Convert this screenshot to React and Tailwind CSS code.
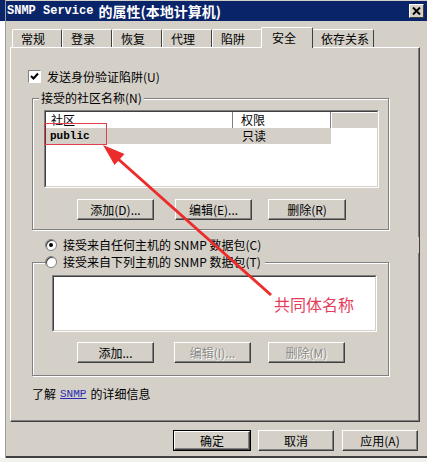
import React from "react";

const cjk = { fontFamily: '"Noto Sans CJK SC", "DejaVu Sans", sans-serif' };

const Btn = ({ label, w = "w-[77px]", disabled = false, isDefault = false, className = "" }) => (
  <div
    className={`${w} h-[21px] flex items-center justify-center text-[12px] leading-none ${
      isDefault ? "border border-black" : ""
    } ${className}`}
    style={cjk}
  >
    <div className="w-full h-full flex items-center justify-center border border-t-white border-l-white border-r-[#404040] border-b-[#404040] shadow-[inset_-1px_-1px_0_#808080]">
      <span className={disabled ? "text-[#8c8a86] [text-shadow:1px_1px_0_#fff]" : "text-black"}>{label}</span>
    </div>
  </div>
);

const Tab = ({ label, active, w = "w-[50px]" }) => (
  <div
    className={`flex items-center whitespace-nowrap px-[8px] text-[12px] leading-none text-black bg-[#d4d0c8] border-t border-l border-white border-r border-r-[#404040] rounded-t-[2px] ${w} ${
      active ? "h-[21px] -mx-[1px] relative z-10 -mb-[1px] pl-[10px]" : "h-[18px]"
    }`}
    style={cjk}
  >
    {label}
  </div>
);

const Radio = ({ checked, label }) => (
  <div className="flex items-center h-[16px] gap-[6px] bg-[#d4d0c8] pr-[4px]">
    <div className="w-[12px] h-[12px] rounded-full bg-white border border-[#808080] shadow-[inset_1px_1px_0_#404040] flex items-center justify-center">
      {checked && <div className="w-[4px] h-[4px] rounded-full bg-black" />}
    </div>
    <span className="text-[12px] leading-none text-black" style={cjk}>
      {label}
    </span>
  </div>
);

const Sunken = ({ className = "", children }) => (
  <div className={`bg-white border border-t-[#808080] border-l-[#808080] border-b-white border-r-white ${className}`}>
    <div className="w-full h-full border border-t-[#404040] border-l-[#404040] border-b-[#d4d0c8] border-r-[#d4d0c8]">
      {children}
    </div>
  </div>
);

export default function App() {
  return (
    <div className="w-[427px] h-[462px] bg-[#f2f1ee] relative overflow-hidden flex">
      {/* window behind */}
      <div className="w-[6px] h-[458px] bg-white border-r border-[#9c9a96] flex flex-col">
        <div className="h-[21px] bg-[#0a246a]" />
      </div>

      <div className="flex-1 h-[458px] bg-[#d4d0c8] border-b-2 border-[#404040] flex flex-col">
        {/* title bar */}
        <div className="h-[20px] mt-[1px] bg-[#0a246a] flex items-center pl-[1px] pr-[3px]">
          <span className="text-white font-bold text-[12px]" style={{ fontFamily: '"Liberation Mono", monospace' }}>
            SNMP Service
          </span>
          <span className="text-white font-bold text-[14px] ml-[5px] leading-none" style={cjk}>
            的属性(本地计算机)
          </span>
          <div className="ml-auto w-[15px] h-[14px] bg-[#d4d0c8] border border-t-white border-l-white border-r-[#404040] border-b-[#404040] flex items-center justify-center">
            <svg width="9" height="8" viewBox="0 0 9 8">
              <path d="M1 0.5 L8 7.5 M8 0.5 L1 7.5" stroke="#000" strokeWidth="2" />
            </svg>
          </div>
        </div>

        {/* tabs */}
        <div className="h-[26px] flex items-end pl-[6px]">
          <Tab label="常规" />
          <Tab label="登录" />
          <Tab label="恢复" />
          <Tab label="代理" />
          <Tab label="陷阱" />
          <Tab label="安全" w="w-[52px]" active />
          <Tab label="依存关系" w="w-[62px]" />
        </div>

        {/* panel */}
        <div className="ml-[4px] w-[410px] h-[375px] border border-t-white border-l-white border-r-[#404040] border-b-[#404040] shadow-[inset_-1px_-1px_0_#808080] flex flex-col">
          {/* checkbox */}
          <div className="mt-[22px] ml-[17px] flex items-center h-[13px] gap-[6px]">
            <div className="w-[13px] h-[13px] bg-white border border-t-[#808080] border-l-[#808080] border-b-white border-r-white flex items-center justify-center">
              <svg width="9" height="9" viewBox="0 0 9 9">
                <path d="M1 4 L3.5 6.5 L8 1.5" stroke="#000" strokeWidth="2" fill="none" />
              </svg>
            </div>
            <span className="text-[12px] leading-none text-black" style={cjk}>
              发送身份验证陷阱(U)
            </span>
          </div>

          {/* group 1 */}
          <div className="relative mt-[15px] ml-[21px] w-[357px] h-[132px] border border-[#808080] shadow-[inset_1px_1px_0_#fff,1px_1px_0_#fff] pt-[11px] pl-[11px]">
            <span className="absolute -top-[8px] left-[6px] px-[2px] bg-[#d4d0c8] text-[12px] leading-[14px] text-black" style={cjk}>
              接受的社区名称(N)
            </span>
            <Sunken className="w-[335px] h-[78px]">
              <div className="flex h-[16px] text-[12px] leading-none text-black" style={cjk}>
                <div className="w-[187px] flex items-center pl-[5px] border-r border-r-[#808080] shadow-[inset_1px_1px_0_#fff]">社区</div>
                <div className="w-[98px] flex items-center pl-[8px] border-r border-r-[#808080] shadow-[inset_1px_1px_0_#fff]">权限</div>
                <div className="flex-1 bg-[#d4d0c8] shadow-[inset_1px_1px_0_#fff]" />
              </div>
              <div className="flex h-[16px] w-[285px] bg-[#d4d0c8] text-[12px] leading-none text-black">
                <div className="w-[187px] flex items-center pl-[4px] font-bold text-[11px]" style={{ fontFamily: '"Liberation Mono", monospace' }}>
                  public
                </div>
                <div className="flex items-center pl-[9px]" style={cjk}>
                  只读
                </div>
              </div>
            </Sunken>
            <div className="flex mt-[11px] ml-[33px]">
              <Btn label="添加(D)..." />
              <Btn label="编辑(E)..." className="ml-[21px]" />
              <Btn label="删除(R)" w="w-[78px]" className="ml-[16px]" />
            </div>
          </div>

          {/* radio 1 */}
          <div className="mt-[7px] ml-[34px]">
            <Radio checked label="接受来自任何主机的 SNMP 数据包(C)" />
          </div>

          {/* group 2 */}
          <div className="relative mt-[9px] ml-[21px] w-[357px] h-[114px] border border-[#808080] shadow-[inset_1px_1px_0_#fff,1px_1px_0_#fff] pt-[12px] pl-[19px]">
            <div className="absolute -top-[9px] left-[12px]">
              <Radio label="接受来自下列主机的 SNMP 数据包(T)" />
            </div>
            <Sunken className="w-[325px] h-[57px]" />
            <div className="flex mt-[10px] ml-[25px]">
              <Btn label="添加..." />
              <Btn label="编辑(I)..." disabled className="ml-[20px]" />
              <Btn label="删除(M)" disabled className="ml-[17px]" />
            </div>
          </div>

          {/* link */}
          <div className="mt-[12px] ml-[21px] flex items-center gap-[4px] text-[12px] leading-none text-black" style={cjk}>
            <span>了解</span>
            <span className="text-[#2a2ab0] underline text-[11px]" style={{ fontFamily: '"Liberation Mono", monospace' }}>
              SNMP
            </span>
            <span>的详细信息</span>
          </div>
        </div>

        {/* footer buttons */}
        <div className="flex mt-[8px] ml-[167px]">
          <Btn label="确定" w="w-[78px]" isDefault />
          <Btn label="取消" w="w-[76px]" className="ml-[7px]" />
          <Btn label="应用(A)" w="w-[76px]" className="ml-[8px]" />
        </div>
      </div>

      {/* annotation overlay */}
      <div className="absolute left-[44px] top-[123px] w-[63px] h-[22px] border border-[#e0404e]" />
      <svg className="absolute inset-0 pointer-events-none" width="427" height="462">
        <line x1="271" y1="295" x2="117" y2="158" stroke="#ec2b2b" strokeWidth="3" />
        <polygon points="103,145 124.5,154 114.5,165" fill="#ec2b2b" />
      </svg>
      <span className="absolute left-[274px] top-[296px] text-[16px] leading-none text-[#e63c5c]" style={cjk}>
        共同体名称
      </span>
    </div>
  );
}
